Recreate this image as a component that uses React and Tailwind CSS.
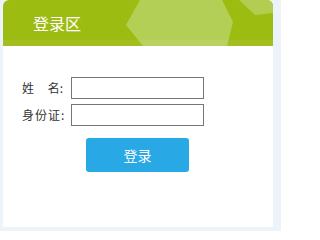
import { useState } from 'react';

function HeaderDecor() {
  // light hexagons behind the title bar
  return (
    <svg
      className="absolute inset-0 h-full w-full"
      viewBox="0 0 270 46"
      preserveAspectRatio="none"
    >
      <polygon points="137,0 219,0 230,22 224,46 140,46 123,25" fill="#b4cf56" />
      <polygon points="236,0 270,0 270,13 252,15" fill="#b2cd50" />
      <rect x="0" y="40" width="270" height="6" fill="#ffffff" opacity="0.06" />
    </svg>
  );
}

function App() {
  const [name, setName] = useState('');
  const [idCard, setIdCard] = useState('');

  return (
    <div
      className="w-[281px] h-[231px] bg-[#edf3fa] pl-[3px] pr-[8px] pb-[4px]"
      style={{ fontFamily: '"Noto Sans CJK SC", "Noto Sans", sans-serif' }}
    >
      <div className="h-full bg-white rounded-t-[6px] overflow-hidden flex flex-col">
        {/* Title bar */}
        <div className="relative h-[46px] bg-[#9dbc12] flex items-center pl-[30px]">
          <HeaderDecor />
          <span className="relative text-white text-[16px] leading-none">登录区</span>
        </div>

        {/* Form */}
        <div className="pt-[31px] pl-[19px]">
          <div className="flex items-center gap-[4px]">
            <label className="w-[45px] text-[12px] text-[#333] flex justify-between pr-[4px]">
              <span>姓</span>
              <span>名:</span>
            </label>
            <input
              value={name}
              onChange={(e) => setName(e.target.value)}
              className="w-[133px] h-[22px] border border-[#767676] bg-white outline-none px-1 text-[12px]"
            />
          </div>
          <div className="flex items-center gap-[4px] mt-[5px]">
            <label className="w-[45px] text-[12px] text-[#333] tracking-[1px]">身份证:</label>
            <input
              value={idCard}
              onChange={(e) => setIdCard(e.target.value)}
              className="w-[133px] h-[22px] border border-[#767676] bg-white outline-none px-1 text-[12px]"
            />
          </div>
          <button className="mt-[12px] ml-[64px] w-[103px] h-[34px] rounded-[3px] bg-[#29a8e6] text-white text-[14px]">
            登录
          </button>
        </div>
      </div>
    </div>
  );
}

export default App;
